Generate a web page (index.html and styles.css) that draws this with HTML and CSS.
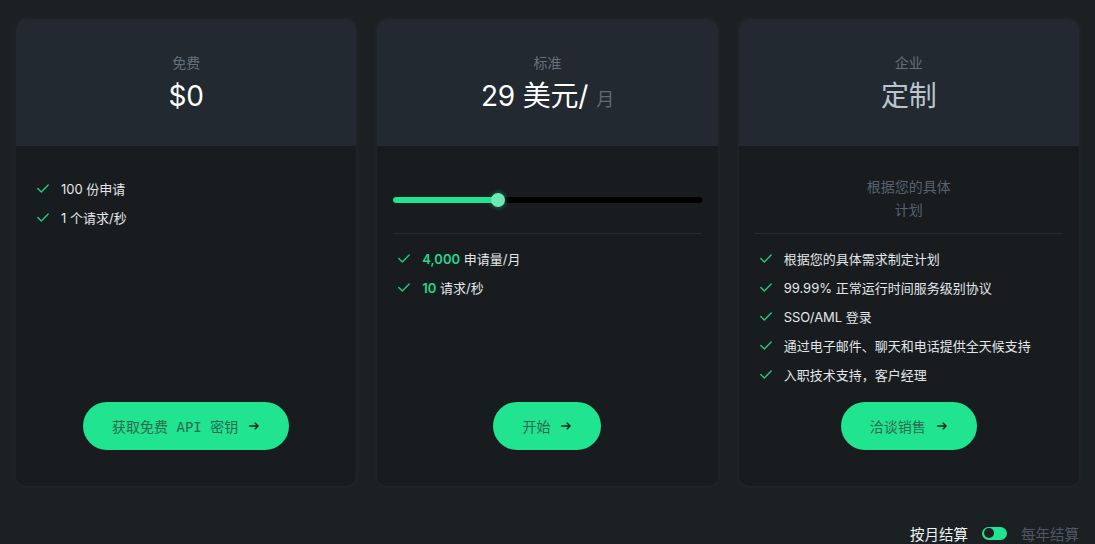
FILE: index.html
```html
<!DOCTYPE html>
<html lang="zh">
<head>
<meta charset="utf-8">
<title>定价</title>
<link rel="stylesheet" href="styles.css">
</head>
<body>
<div class="page">
  <div class="plans">
    <section class="card">
      <header class="card-head">
        <div class="tier">免费</div>
        <div class="price">$0</div>
      </header>
      <div class="card-body">
        <ul class="features features-first">
          <li><svg class="check" viewBox="0 0 12 9"><polyline points="0.8,4.6 4.3,8 11.2,0.9"/></svg><span>100 份申请</span></li>
          <li><svg class="check" viewBox="0 0 12 9"><polyline points="0.8,4.6 4.3,8 11.2,0.9"/></svg><span>1 个请求/秒</span></li>
        </ul>
        <a class="btn">获取免费 API 密钥<svg class="arrow" viewBox="0 0 10 8"><path d="M0 4H9M5.8 0.8L9 4L5.8 7.2"/></svg></a>
      </div>
    </section>

    <section class="card">
      <header class="card-head">
        <div class="tier">标准</div>
        <div class="price">29 美元/<span class="per">月</span></div>
      </header>
      <div class="card-body">
        <div class="card-top top-slider">
          <div class="slider">
            <div class="track"><div class="fill" style="width:34%"></div></div>
            <div class="thumb" style="left:34%"></div>
          </div>
        </div>
        <ul class="features">
          <li><svg class="check" viewBox="0 0 12 9"><polyline points="0.8,4.6 4.3,8 11.2,0.9"/></svg><span><b class="hl">4,000</b> 申请量/月</span></li>
          <li><svg class="check" viewBox="0 0 12 9"><polyline points="0.8,4.6 4.3,8 11.2,0.9"/></svg><span><b class="hl">10</b> 请求/秒</span></li>
        </ul>
        <a class="btn">开始<svg class="arrow" viewBox="0 0 10 8"><path d="M0 4H9M5.8 0.8L9 4L5.8 7.2"/></svg></a>
      </div>
    </section>

    <section class="card">
      <header class="card-head">
        <div class="tier">企业</div>
        <div class="price price-custom">定制</div>
      </header>
      <div class="card-body">
        <div class="card-top top-desc">
          <p class="desc">根据您的具体计划</p>
        </div>
        <ul class="features">
          <li><svg class="check" viewBox="0 0 12 9"><polyline points="0.8,4.6 4.3,8 11.2,0.9"/></svg><span>根据您的具体需求制定计划</span></li>
          <li><svg class="check" viewBox="0 0 12 9"><polyline points="0.8,4.6 4.3,8 11.2,0.9"/></svg><span>99.99% 正常运行时间服务级别协议</span></li>
          <li><svg class="check" viewBox="0 0 12 9"><polyline points="0.8,4.6 4.3,8 11.2,0.9"/></svg><span>SSO/AML 登录</span></li>
          <li><svg class="check" viewBox="0 0 12 9"><polyline points="0.8,4.6 4.3,8 11.2,0.9"/></svg><span>通过电子邮件、聊天和电话提供全天候支持</span></li>
          <li><svg class="check" viewBox="0 0 12 9"><polyline points="0.8,4.6 4.3,8 11.2,0.9"/></svg><span>入职技术支持，客户经理</span></li>
        </ul>
        <a class="btn">洽谈销售<svg class="arrow" viewBox="0 0 10 8"><path d="M0 4H9M5.8 0.8L9 4L5.8 7.2"/></svg></a>
      </div>
    </section>
  </div>

  <div class="billing">
    <span class="bill-active">按月结算</span>
    <span class="toggle"><span class="knob"></span></span>
    <span class="bill-muted">每年结算</span>
  </div>
</div>
</body>
</html>
```

FILE: styles.css
```css
* { box-sizing: border-box; }
html, body {
  margin: 0;
  padding: 0;
  overflow: hidden;
  background: #1b2023;
}
body {
  font-family: Inter, "Noto Sans CJK SC", sans-serif;
  color: #e2e6e9;
  width: 1095px;
  height: 544px;
}
.page {
  padding: 19px 16px 0;
}
.plans {
  display: grid;
  grid-template-columns: repeat(3, 1fr);
  gap: 21px;
}
.card {
  height: 467px;
  display: flex;
  flex-direction: column;
  border-radius: 10px;
  overflow: hidden;
  background: #181c1f;
  box-shadow: 0 0 3px 2px rgba(255, 255, 255, 0.025);
}
.card-head {
  height: 127px;
  flex: none;
  background: #222930;
  display: flex;
  flex-direction: column;
  align-items: center;
  padding-top: 34px;
}
.tier {
  font-size: 14px;
  line-height: 20px;
  color: #65707c;
}
.price {
  margin-top: 5px;
  font-size: 28px;
  line-height: 36px;
  color: #ffffff;
  letter-spacing: -0.2px;
}
.per {
  font-size: 18px;
  color: #5f6a75;
  margin-left: 8px;
}
.price-custom {
  color: #b9c4cd;
}
.card-body {
  flex: 1;
  display: flex;
  flex-direction: column;
  padding: 0 16px 36px;
}
.card-top {
  height: 88px;
  flex: none;
  border-bottom: 1px solid #262c30;
}
.top-slider {
  padding-top: 47px;
}
.top-desc {
  padding-top: 29px;
  display: flex;
  justify-content: center;
}
.desc {
  margin: 0;
  width: 90px;
  text-align: center;
  font-size: 14px;
  line-height: 23px;
  color: #56626e;
}
.slider {
  position: relative;
  height: 14px;
  display: flex;
  align-items: center;
}
.track {
  width: 100%;
  height: 6px;
  border-radius: 3px;
  background: #000;
  overflow: hidden;
}
.fill {
  height: 100%;
  background: #20e490;
}
.thumb {
  position: absolute;
  top: 0;
  width: 14px;
  height: 14px;
  margin-left: -7px;
  border-radius: 50%;
  background: #6fe9b3;
  box-shadow: 0 0 4px 1px rgba(32, 228, 144, 0.35);
}
.features {
  list-style: none;
  margin: 0;
  padding: 10px 0 0 5px;
}
.features-first {
  padding-top: 28px;
}
.features li {
  height: 29px;
  display: flex;
  align-items: center;
  gap: 12px;
  font-size: 13px;
  color: #e2e6e9;
}
.check {
  width: 12px;
  height: 9px;
  flex: none;
  fill: none;
  stroke: #22c981;
  stroke-width: 1.4;
  stroke-linecap: round;
  stroke-linejoin: round;
}
.hl {
  color: #20d98a;
  font-weight: 600;
}
.btn {
  margin-top: auto;
  align-self: center;
  height: 48px;
  display: inline-flex;
  align-items: center;
  gap: 11px;
  padding: 0 30px 0 29px;
  border-radius: 24px;
  background: #20e490;
  color: #2f6a50;
  font-family: "DejaVu Sans Mono", "Noto Sans CJK SC", monospace;
  font-size: 14px;
  white-space: pre;
  text-decoration: none;
}
.arrow {
  width: 10px;
  height: 8px;
  fill: none;
  stroke: #10291e;
  stroke-width: 1.5;
}
.billing {
  margin-top: 37px;
  display: flex;
  justify-content: flex-end;
  align-items: center;
  gap: 14px;
  height: 20px;
  font-size: 14.5px;
}
.bill-active {
  color: #f0f3f5;
}
.bill-muted {
  color: #4f5964;
}
.toggle {
  position: relative;
  width: 25px;
  height: 13px;
  border-radius: 7px;
  background: #20e490;
}
.knob {
  position: absolute;
  left: 1.5px;
  top: 1.5px;
  width: 10px;
  height: 10px;
  border-radius: 50%;
  background: #1b2023;
}
```
